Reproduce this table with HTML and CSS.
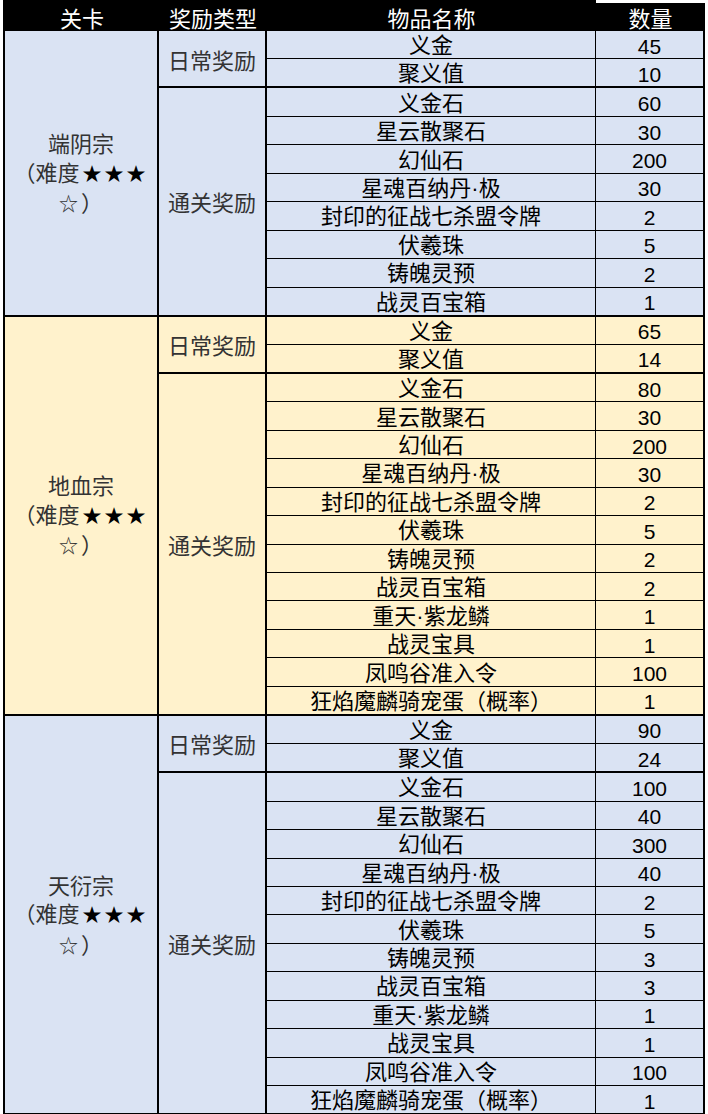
FILE: index.html
```html
<!DOCTYPE html>
<html lang="zh-CN">
<head>
<meta charset="utf-8">
<title>关卡奖励</title>
<link rel="stylesheet" href="styles.css">
</head>
<body>
<table class="grid">
<colgroup><col class="c1"><col class="c2"><col class="c3"><col class="c4"></colgroup>
<thead>
<tr class="head"><th>关卡</th><th>奖励类型</th><th>物品名称</th><th class="hq">数量</th></tr>
</thead>
<tbody class="blue">
<tr><td class="stage" rowspan="10">端阴宗<br>（难度<span class="stars">★★★</span><br><span class="star1">☆</span>）</td><td class="type" rowspan="2">日常奖励</td><td class="item">义金</td><td class="num">45</td></tr>
<tr class="end"><td class="item">聚义值</td><td class="num">10</td></tr>
<tr><td class="type" rowspan="8">通关奖励</td><td class="item">义金石</td><td class="num">60</td></tr>
<tr><td class="item">星云散聚石</td><td class="num">30</td></tr>
<tr><td class="item">幻仙石</td><td class="num">200</td></tr>
<tr><td class="item">星魂百纳丹·极</td><td class="num">30</td></tr>
<tr><td class="item">封印的征战七杀盟令牌</td><td class="num">2</td></tr>
<tr><td class="item">伏羲珠</td><td class="num">5</td></tr>
<tr><td class="item">铸魄灵预</td><td class="num">2</td></tr>
<tr class="end"><td class="item">战灵百宝箱</td><td class="num">1</td></tr>
</tbody>
<tbody class="yellow">
<tr><td class="stage" rowspan="14">地血宗<br>（难度<span class="stars">★★★</span><br><span class="star1">☆</span>）</td><td class="type" rowspan="2">日常奖励</td><td class="item">义金</td><td class="num">65</td></tr>
<tr class="end"><td class="item">聚义值</td><td class="num">14</td></tr>
<tr><td class="type" rowspan="12">通关奖励</td><td class="item">义金石</td><td class="num">80</td></tr>
<tr><td class="item">星云散聚石</td><td class="num">30</td></tr>
<tr><td class="item">幻仙石</td><td class="num">200</td></tr>
<tr><td class="item">星魂百纳丹·极</td><td class="num">30</td></tr>
<tr><td class="item">封印的征战七杀盟令牌</td><td class="num">2</td></tr>
<tr><td class="item">伏羲珠</td><td class="num">5</td></tr>
<tr><td class="item">铸魄灵预</td><td class="num">2</td></tr>
<tr><td class="item">战灵百宝箱</td><td class="num">2</td></tr>
<tr><td class="item">重天·紫龙鳞</td><td class="num">1</td></tr>
<tr><td class="item">战灵宝具</td><td class="num">1</td></tr>
<tr><td class="item">凤鸣谷准入令</td><td class="num">100</td></tr>
<tr class="end"><td class="item">狂焰魔麟骑宠蛋（概率）</td><td class="num">1</td></tr>
</tbody>
<tbody class="blue">
<tr><td class="stage" rowspan="14">天衍宗<br>（难度<span class="stars">★★★</span><br><span class="star1">☆</span>）</td><td class="type" rowspan="2">日常奖励</td><td class="item">义金</td><td class="num">90</td></tr>
<tr class="end"><td class="item">聚义值</td><td class="num">24</td></tr>
<tr><td class="type" rowspan="12">通关奖励</td><td class="item">义金石</td><td class="num">100</td></tr>
<tr><td class="item">星云散聚石</td><td class="num">40</td></tr>
<tr><td class="item">幻仙石</td><td class="num">300</td></tr>
<tr><td class="item">星魂百纳丹·极</td><td class="num">40</td></tr>
<tr><td class="item">封印的征战七杀盟令牌</td><td class="num">2</td></tr>
<tr><td class="item">伏羲珠</td><td class="num">5</td></tr>
<tr><td class="item">铸魄灵预</td><td class="num">3</td></tr>
<tr><td class="item">战灵百宝箱</td><td class="num">3</td></tr>
<tr><td class="item">重天·紫龙鳞</td><td class="num">1</td></tr>
<tr><td class="item">战灵宝具</td><td class="num">1</td></tr>
<tr><td class="item">凤鸣谷准入令</td><td class="num">100</td></tr>
<tr class="end"><td class="item">狂焰魔麟骑宠蛋（概率）</td><td class="num">1</td></tr>
</tbody>
</table>
</body>
</html>
```
FILE: styles.css
```css
html, body {
  margin: 0;
  padding: 0;
  background: #ffffff;
}

.grid {
  margin-left: 3px;
  width: 702px;
  table-layout: fixed;
  border-collapse: separate;
  border-spacing: 0;
  border-left: 2px solid #000;
  font-family: "Noto Sans CJK SC", "Noto Sans", sans-serif;
  font-size: 22px;
  color: #000;
}

.c1 { width: 154px; }
.c2 { width: 108px; }
.c3 { width: 329px; }
.c4 { width: 109px; }

.head {
  height: 31px;
}

.head th {
  background: #000;
  color: #fff;
  font-weight: normal;
  padding: 3px 0 0 0;
  line-height: 24px;
  text-align: center;
  vertical-align: middle;
}

.head th.hq {
  border-top: 3px solid #fff;
  padding-top: 0;
}

tbody tr {
  height: 28.45px;
}

.blue td { background: #dae3f3; }
.yellow td { background: #fff2cc; }

td {
  padding: 0;
  text-align: center;
  vertical-align: middle;
  white-space: nowrap;
}

.stage {
  color: #333;
  line-height: 28.5px;
  border-right: 2px solid #000;
  border-bottom: 2px solid #000;
}

.stars {
  color: #000;
  font-size: 19px;
  letter-spacing: 3px;
  margin-left: 3px;
}

.star1 {
  font-size: 19px;
  margin-right: 3px;
}

.type {
  color: #333;
  line-height: 28px;
  border-right: 2px solid #000;
  border-bottom: 2px solid #000;
}

.item {
  font-family: "Liberation Sans", "Noto Sans CJK SC", sans-serif;
  padding-top: 3px;
  line-height: 24px;
  border-right: 1px solid #000;
  border-bottom: 1px solid #000;
}

.num {
  padding-top: 4px;
  line-height: 22px;
  font-family: "Liberation Sans", Arial, sans-serif;
  font-size: 21px;
  border-right: 2px solid #000;
  border-bottom: 1px solid #000;
}

.end .item,
.end .num {
  border-bottom-width: 2px;
}
```
